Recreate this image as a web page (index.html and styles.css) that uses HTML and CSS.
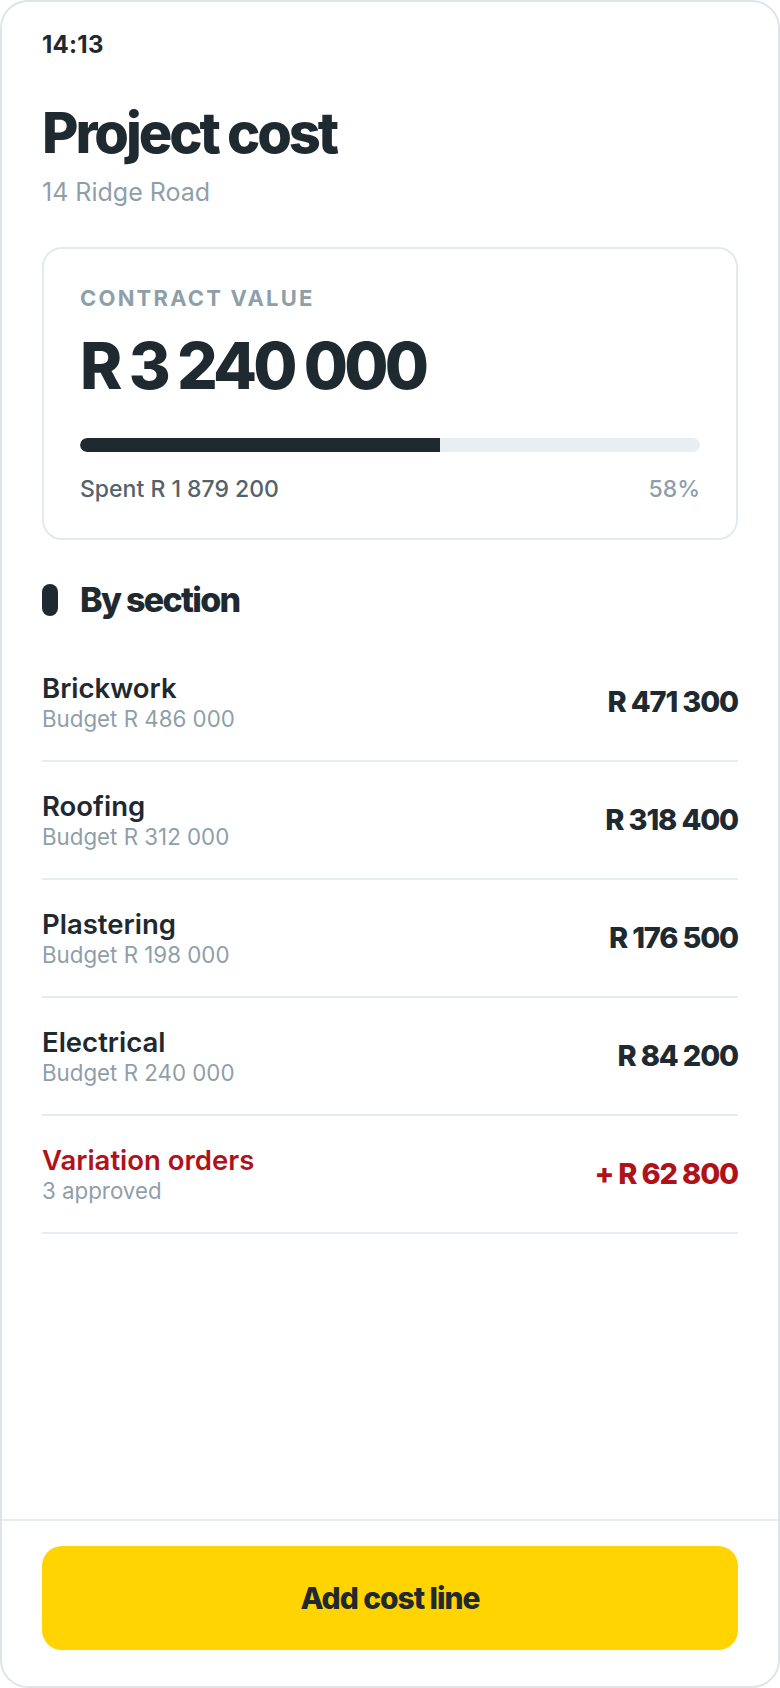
FILE: index.html
```html
<!DOCTYPE html>
<html lang="en">
<head>
<meta charset="utf-8">
<title>Project cost</title>
<link rel="stylesheet" href="styles.css">
</head>
<body>
<div class="phone">
  <main class="content">
    <div class="status">14:13</div>
    <h1 class="title">Project cost</h1>
    <p class="subtitle">14 Ridge Road</p>

    <section class="card">
      <div class="card-label">CONTRACT VALUE</div>
      <div class="card-value">R 3 240 000</div>
      <div class="bar"><div class="bar-fill" style="width:58%"></div></div>
      <div class="card-foot">
        <span class="spent">Spent R 1 879 200</span>
        <span class="pct">58%</span>
      </div>
    </section>

    <h2 class="section-head"><span class="pill"></span>By section</h2>

    <ul class="rows">
      <li class="row">
        <div class="row-text"><div class="row-name">Brickwork</div><div class="row-sub">Budget R 486 000</div></div>
        <div class="row-amt">R 471 300</div>
      </li>
      <li class="row">
        <div class="row-text"><div class="row-name">Roofing</div><div class="row-sub">Budget R 312 000</div></div>
        <div class="row-amt">R 318 400</div>
      </li>
      <li class="row">
        <div class="row-text"><div class="row-name">Plastering</div><div class="row-sub">Budget R 198 000</div></div>
        <div class="row-amt">R 176 500</div>
      </li>
      <li class="row">
        <div class="row-text"><div class="row-name">Electrical</div><div class="row-sub">Budget R 240 000</div></div>
        <div class="row-amt">R 84 200</div>
      </li>
      <li class="row row-var">
        <div class="row-text"><div class="row-name">Variation orders</div><div class="row-sub">3 approved</div></div>
        <div class="row-amt">+ R 62 800</div>
      </li>
    </ul>
  </main>
  <footer class="footer">
    <button class="btn" type="button">Add cost line</button>
  </footer>
</div>
</body>
</html>
```

FILE: styles.css
```css
* { box-sizing: border-box; }
html, body { margin: 0; padding: 0; background: #ffffff; }
body { font-family: Inter, "Noto Sans", sans-serif; color: #1f2930; }

.phone {
  width: 780px;
  height: 1688px;
  border: 2px solid #dfe4e8;
  border-radius: 28px;
  display: flex;
  flex-direction: column;
  overflow: hidden;
  background: #fff;
}

.content {
  flex: 1;
  padding: 29px 40px 0;
}

.status {
  font-size: 24px;
  line-height: 28px;
  font-weight: 700;
  letter-spacing: 0.01em;
}

.title {
  margin: 42px 0 0;
  font-size: 56px;
  line-height: 64px;
  font-weight: 800;
  letter-spacing: -0.055em;
}

.subtitle {
  margin: 12px 0 0;
  font-size: 25px;
  line-height: 30px;
  color: #8f9fa9;
}

.card {
  margin-top: 40px;
  border: 2px solid #e4e9ed;
  border-radius: 20px;
  padding: 36px 36px 35px;
}

.card-label {
  font-size: 22px;
  line-height: 26px;
  font-weight: 700;
  letter-spacing: 0.1em;
  color: #8f9fa9;
}

.card-value {
  margin-top: 19px;
  font-size: 64px;
  line-height: 72px;
  font-weight: 800;
  letter-spacing: -0.06em;
}

.bar {
  margin-top: 36px;
  height: 14px;
  border-radius: 7px;
  background: #e9eef2;
  overflow: hidden;
}
.bar-fill {
  height: 100%;
  background: #1f2930;
  border-radius: 7px 0 0 7px;
}

.card-foot {
  margin-top: 23px;
  display: flex;
  justify-content: space-between;
  font-size: 23px;
  line-height: 28px;
}
.spent { color: #56626b; font-weight: 500; }
.pct { color: #8f9fa9; font-weight: 500; }

.section-head {
  margin: 40px 0 0;
  display: flex;
  align-items: center;
  gap: 22px;
  font-size: 34px;
  line-height: 40px;
  font-weight: 800;
  letter-spacing: -0.05em;
}
.pill {
  width: 16px;
  height: 32px;
  border-radius: 8px;
  background: #1f2930;
  flex: none;
}

.rows {
  list-style: none;
  margin: 24px 0 0;
  padding: 0;
}
.row {
  display: flex;
  align-items: center;
  justify-content: space-between;
  padding: 28px 0;
  border-bottom: 2px solid #e6ebef;
}
.row-name {
  font-size: 27.5px;
  line-height: 32px;
  font-weight: 600;
}
.row-sub {
  margin-top: 2px;
  font-size: 22.3px;
  line-height: 26px;
  color: #8f9fa9;
}
.row-amt {
  font-size: 29px;
  line-height: 34px;
  font-weight: 800;
  letter-spacing: -0.04em;
}
.row-var .row-name,
.row-var .row-amt { color: #b0121a; }

.footer {
  border-top: 2px solid #e6ebef;
  padding: 25px 40px 36px;
}
.btn {
  display: block;
  width: 100%;
  height: 104px;
  border: 0;
  border-radius: 20px;
  background: #ffd400;
  color: #1f2930;
  font-family: Inter, "Noto Sans", sans-serif;
  font-size: 30px;
  font-weight: 800;
  letter-spacing: -0.035em;
}
```
